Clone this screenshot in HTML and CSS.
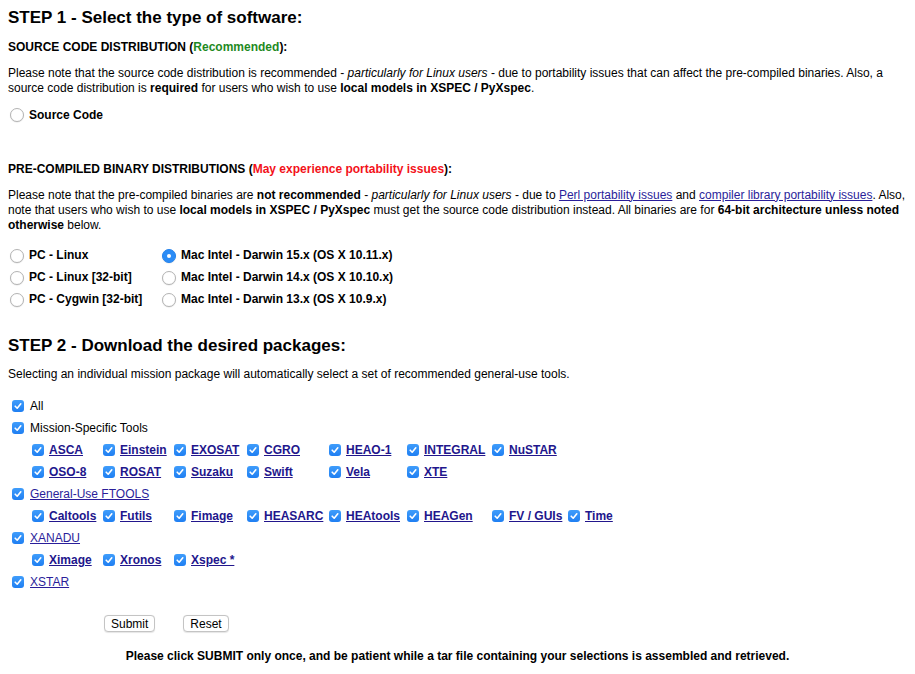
FILE: index.html
```html
<!DOCTYPE html>
<html>
<head>
<meta charset="utf-8">
<link rel="stylesheet" href="styles.css">
</head>
<body>
<form class="page">
  <h1 class="step step1">STEP 1 - Select the type of software:</h1>
  <p class="sub">SOURCE CODE DISTRIBUTION (<span class="green">Recommended</span>):</p>
  <p class="note">Please note that the source code distribution is recommended - <i>particularly for Linux users</i> - due to portability issues that can affect the pre-compiled binaries. Also, a source code distribution is <b>required</b> for users who wish to use <b>local models in XSPEC / PyXspec</b>.</p>
  <div class="radio-list src">
    <label class="opt"><span class="radio"></span><b>Source Code</b></label>
  </div>

  <p class="sub pre">PRE-COMPILED BINARY DISTRIBUTIONS (<span class="red">May experience portability issues</span>):</p>
  <p class="note">Please note that the pre-compiled binaries are <b>not recommended</b> - <i>particularly for Linux users</i> - due to <a href="#" class="plain">Perl portability issues</a> and <a href="#" class="plain">compiler library portability issues</a>. Also, note that users who wish to use <b>local models in XSPEC / PyXspec</b> must get the source code distribution instead. All binaries are for <b>64-bit architecture unless noted otherwise</b> below.</p>
  <div class="radio-list bin">
    <label class="opt"><span class="radio"></span><b>PC - Linux</b></label>
    <label class="opt"><span class="radio on"></span><b>Mac Intel - Darwin 15.x (OS X 10.11.x)</b></label>
    <label class="opt"><span class="radio"></span><b>PC - Linux [32-bit]</b></label>
    <label class="opt"><span class="radio"></span><b>Mac Intel - Darwin 14.x (OS X 10.10.x)</b></label>
    <label class="opt"><span class="radio"></span><b>PC - Cygwin [32-bit]</b></label>
    <label class="opt"><span class="radio"></span><b>Mac Intel - Darwin 13.x (OS X 10.9.x)</b></label>
  </div>

  <h1 class="step step2">STEP 2 - Download the desired packages:</h1>
  <p class="note">Selecting an individual mission package will automatically select a set of recommended general-use tools.</p>

  <div class="tree">
    <div class="top"><span class="cb"><svg viewBox="0 0 12 12"><path d="M3.2 6.2 L5.2 8.2 L8.8 3.8"/></svg></span>All</div>
    <div class="top"><span class="cb"><svg viewBox="0 0 12 12"><path d="M3.2 6.2 L5.2 8.2 L8.8 3.8"/></svg></span>Mission-Specific Tools</div>
    <div class="pkgs">
      <div class="pkg"><span class="cb"><svg viewBox="0 0 12 12"><path d="M3.2 6.2 L5.2 8.2 L8.8 3.8"/></svg></span><a href="#">ASCA</a></div>
      <div class="pkg"><span class="cb"><svg viewBox="0 0 12 12"><path d="M3.2 6.2 L5.2 8.2 L8.8 3.8"/></svg></span><a href="#">Einstein</a></div>
      <div class="pkg"><span class="cb"><svg viewBox="0 0 12 12"><path d="M3.2 6.2 L5.2 8.2 L8.8 3.8"/></svg></span><a href="#">EXOSAT</a></div>
      <div class="pkg"><span class="cb"><svg viewBox="0 0 12 12"><path d="M3.2 6.2 L5.2 8.2 L8.8 3.8"/></svg></span><a href="#">CGRO</a></div>
      <div class="pkg"><span class="cb"><svg viewBox="0 0 12 12"><path d="M3.2 6.2 L5.2 8.2 L8.8 3.8"/></svg></span><a href="#">HEAO-1</a></div>
      <div class="pkg"><span class="cb"><svg viewBox="0 0 12 12"><path d="M3.2 6.2 L5.2 8.2 L8.8 3.8"/></svg></span><a href="#">INTEGRAL</a></div>
      <div class="pkg"><span class="cb"><svg viewBox="0 0 12 12"><path d="M3.2 6.2 L5.2 8.2 L8.8 3.8"/></svg></span><a href="#">NuSTAR</a></div>
      <div class="spacer"></div>
      <div class="pkg"><span class="cb"><svg viewBox="0 0 12 12"><path d="M3.2 6.2 L5.2 8.2 L8.8 3.8"/></svg></span><a href="#">OSO-8</a></div>
      <div class="pkg"><span class="cb"><svg viewBox="0 0 12 12"><path d="M3.2 6.2 L5.2 8.2 L8.8 3.8"/></svg></span><a href="#">ROSAT</a></div>
      <div class="pkg"><span class="cb"><svg viewBox="0 0 12 12"><path d="M3.2 6.2 L5.2 8.2 L8.8 3.8"/></svg></span><a href="#">Suzaku</a></div>
      <div class="pkg"><span class="cb"><svg viewBox="0 0 12 12"><path d="M3.2 6.2 L5.2 8.2 L8.8 3.8"/></svg></span><a href="#">Swift</a></div>
      <div class="pkg"><span class="cb"><svg viewBox="0 0 12 12"><path d="M3.2 6.2 L5.2 8.2 L8.8 3.8"/></svg></span><a href="#">Vela</a></div>
      <div class="pkg"><span class="cb"><svg viewBox="0 0 12 12"><path d="M3.2 6.2 L5.2 8.2 L8.8 3.8"/></svg></span><a href="#">XTE</a></div>
    </div>
    <div class="top"><span class="cb"><svg viewBox="0 0 12 12"><path d="M3.2 6.2 L5.2 8.2 L8.8 3.8"/></svg></span><a href="#" class="plain">General-Use FTOOLS</a></div>
    <div class="pkgs">
      <div class="pkg"><span class="cb"><svg viewBox="0 0 12 12"><path d="M3.2 6.2 L5.2 8.2 L8.8 3.8"/></svg></span><a href="#">Caltools</a></div>
      <div class="pkg"><span class="cb"><svg viewBox="0 0 12 12"><path d="M3.2 6.2 L5.2 8.2 L8.8 3.8"/></svg></span><a href="#">Futils</a></div>
      <div class="pkg"><span class="cb"><svg viewBox="0 0 12 12"><path d="M3.2 6.2 L5.2 8.2 L8.8 3.8"/></svg></span><a href="#">Fimage</a></div>
      <div class="pkg"><span class="cb"><svg viewBox="0 0 12 12"><path d="M3.2 6.2 L5.2 8.2 L8.8 3.8"/></svg></span><a href="#">HEASARC</a></div>
      <div class="pkg"><span class="cb"><svg viewBox="0 0 12 12"><path d="M3.2 6.2 L5.2 8.2 L8.8 3.8"/></svg></span><a href="#">HEAtools</a></div>
      <div class="pkg"><span class="cb"><svg viewBox="0 0 12 12"><path d="M3.2 6.2 L5.2 8.2 L8.8 3.8"/></svg></span><a href="#">HEAGen</a></div>
      <div class="pkg"><span class="cb"><svg viewBox="0 0 12 12"><path d="M3.2 6.2 L5.2 8.2 L8.8 3.8"/></svg></span><a href="#">FV / GUIs</a></div>
      <div class="pkg"><span class="cb"><svg viewBox="0 0 12 12"><path d="M3.2 6.2 L5.2 8.2 L8.8 3.8"/></svg></span><a href="#">Time</a></div>
    </div>
    <div class="top"><span class="cb"><svg viewBox="0 0 12 12"><path d="M3.2 6.2 L5.2 8.2 L8.8 3.8"/></svg></span><a href="#" class="plain">XANADU</a></div>
    <div class="pkgs">
      <div class="pkg"><span class="cb"><svg viewBox="0 0 12 12"><path d="M3.2 6.2 L5.2 8.2 L8.8 3.8"/></svg></span><a href="#">Ximage</a></div>
      <div class="pkg"><span class="cb"><svg viewBox="0 0 12 12"><path d="M3.2 6.2 L5.2 8.2 L8.8 3.8"/></svg></span><a href="#">Xronos</a></div>
      <div class="pkg"><span class="cb"><svg viewBox="0 0 12 12"><path d="M3.2 6.2 L5.2 8.2 L8.8 3.8"/></svg></span><a href="#">Xspec *</a></div>
    </div>
    <div class="top"><span class="cb"><svg viewBox="0 0 12 12"><path d="M3.2 6.2 L5.2 8.2 L8.8 3.8"/></svg></span><a href="#" class="plain">XSTAR</a></div>
  </div>

  <div class="buttons">
    <button type="button" class="btn">Submit</button>
    <button type="button" class="btn">Reset</button>
  </div>
  <p class="final">Please click SUBMIT only once, and be patient while a tar file containing your selections is assembled and retrieved.</p>
</form>
</body>
</html>
```

FILE: styles.css
```css
html, body {
  margin: 0;
  padding: 0;
  background: #ffffff;
}
body {
  font-family: "Liberation Sans", Arial, sans-serif;
  font-size: 12px;
  line-height: 15px;
  color: #000000;
}
.page {
  padding: 8px 8px 0 8px;
  margin: 0;
}
p { margin: 0; }
.step {
  margin: 0;
  font-size: 17px;
  line-height: 20px;
  font-weight: bold;
}
.step2 { margin-top: 25px; }
.sub {
  font-weight: bold;
  margin-top: 11.5px;
}
.sub.pre { margin-top: 35.5px; }
.note { margin-top: 11px; }
.step2 + .note { margin-top: 11px; }
.green { color: #1f8a1f; }
.red { color: #f3121a; }
a { color: #22168c; }
a.plain { font-weight: normal; color: #2a1e9a; }

.radio-list.src { margin-top: 8.5px; }
.radio-list.bin {
  margin-top: 12px;
  display: grid;
  grid-template-columns: 152px auto;
}
.opt {
  display: flex;
  align-items: center;
  height: 22px;
  padding-left: 2px;
  gap: 5px;
}
.radio {
  width: 12px;
  height: 12px;
  border-radius: 50%;
  border: 1px solid #b4b4b4;
  background: #fff;
  box-shadow: 0 0.5px 1px rgba(0,0,0,0.12);
  flex: none;
  position: relative;
}
.radio.on {
  background: #2b8cf6;
  border-color: #2282ee;
}
.radio.on::after {
  content: "";
  position: absolute;
  left: 4px;
  top: 4px;
  width: 4px;
  height: 4px;
  border-radius: 50%;
  background: #fff;
}

.tree { margin-top: 13.5px; }
.top {
  display: flex;
  align-items: center;
  height: 22px;
  padding-left: 4px;
  gap: 6px;
}
.pkgs {
  display: grid;
  grid-template-columns: 71px 71px 73px 82px 78px 85px 76px auto;
  padding-left: 24px;
}
.pkg {
  display: flex;
  align-items: center;
  height: 22px;
  gap: 5px;
  font-weight: bold;
  white-space: nowrap;
}
.spacer { height: 22px; }
.cb {
  width: 12px;
  height: 12px;
  border-radius: 3px;
  background: linear-gradient(#3f9dfb, #1f7ff2);
  flex: none;
  display: flex;
}
.cb svg {
  width: 12px;
  height: 12px;
  fill: none;
  stroke: #ffffff;
  stroke-width: 1.6;
  stroke-linecap: round;
  stroke-linejoin: round;
}

.buttons {
  margin-top: 22px;
  padding-left: 96px;
  display: flex;
  gap: 28px;
}
.btn {
  font-family: "Liberation Sans", Arial, sans-serif;
  font-size: 12px;
  line-height: 14px;
  height: 17px;
  padding: 0 6px;
  background: #ffffff;
  border: 1px solid #c4c4c4;
  border-radius: 4px;
  color: #000;
  box-shadow: 0 0.5px 1px rgba(0,0,0,0.1);
}
.final {
  margin-top: 17px;
  text-align: center;
  font-weight: bold;
}
```
